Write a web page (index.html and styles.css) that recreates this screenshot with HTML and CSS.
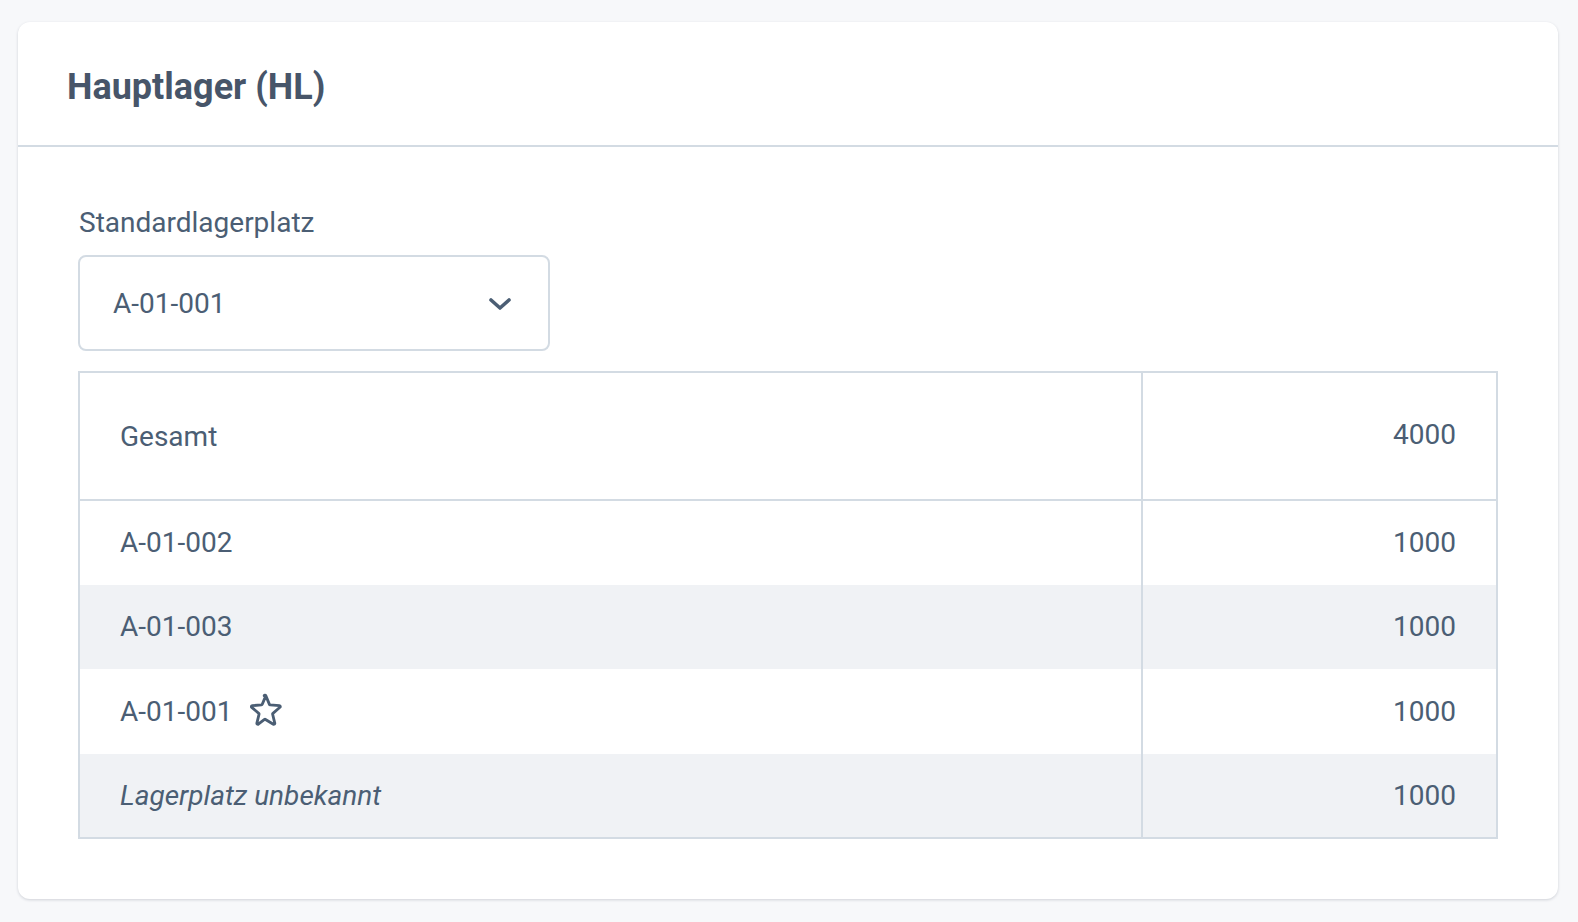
FILE: index.html
```html
<!DOCTYPE html>
<html lang="de">
<head>
<meta charset="utf-8">
<title>Hauptlager</title>
<link rel="stylesheet" href="styles.css">
</head>
<body>
<div class="card">
  <div class="card-header">
    <h1 class="title">Hauptlager (HL)</h1>
  </div>
  <div class="card-body">
    <label class="label">Standardlagerplatz</label>
    <div class="select">
      <span class="select-value">A-01-001</span>
      <svg class="chevron" viewBox="0 0 24 14" width="24" height="14" fill="none" stroke="currentColor" stroke-width="3.6" stroke-linecap="round" stroke-linejoin="round"><path d="M3 3l9 8 9-8"/></svg>
    </div>
    <table class="stock">
      <tr class="head">
        <td class="name">Gesamt</td>
        <td class="qty qty-head">4000</td>
      </tr>
      <tr>
        <td class="name">A-01-002</td>
        <td class="qty">1000</td>
      </tr>
      <tr class="alt">
        <td class="name">A-01-003</td>
        <td class="qty">1000</td>
      </tr>
      <tr>
        <td class="name"><span class="with-icon">A-01-001<svg class="star" viewBox="0 0 24 24" width="40" height="40" fill="none" stroke="currentColor" stroke-width="1.7" stroke-linejoin="round"><path d="M11.48 3.5a.56.56 0 0 1 1.04 0l2.13 5.1a.56.56 0 0 0 .47.35l5.52.44c.5.04.7.66.32.99l-4.2 3.6a.56.56 0 0 0-.18.56l1.28 5.38a.56.56 0 0 1-.84.61l-4.73-2.88a.56.56 0 0 0-.58 0L7.98 20.53a.56.56 0 0 1-.84-.61l1.28-5.38a.56.56 0 0 0-.18-.56l-4.2-3.6a.56.56 0 0 1 .32-.99l5.52-.44a.56.56 0 0 0 .47-.35l2.13-5.1z"/></svg></span></td>
        <td class="qty">1000</td>
      </tr>
      <tr class="alt">
        <td class="name unknown">Lagerplatz unbekannt</td>
        <td class="qty">1000</td>
      </tr>
    </table>
  </div>
</div>
</body>
</html>
```
FILE: styles.css
```css
* { box-sizing: border-box; }
html, body { margin: 0; padding: 0; }
body {
  background: #f7f8fa;
  font-family: Roboto, "Liberation Sans", Arial, sans-serif;
  color: #4b5e74;
  padding: 22px 20px 0 18px;
  height: 922px;
}
.card {
  background: #ffffff;
  border-radius: 12px;
  box-shadow: 0 1px 3px rgba(30, 41, 59, 0.18);
  height: 877px;
  display: flex;
  flex-direction: column;
}
.card-header {
  height: 127px;
  border-bottom: 2px solid #d3dbe3;
  padding: 0 49px;
  display: flex;
  align-items: center;
}
.title {
  margin: 0;
  padding-top: 7px;
  font-size: 36px;
  font-weight: 700;
  color: #475569;
}
.card-body {
  padding: 59px 60px 60px 60px;
  display: flex;
  flex-direction: column;
}
.label {
  font-size: 28px;
  line-height: 33px;
  margin-bottom: 16px;
  padding-left: 1px;
}
.select {
  width: 472px;
  height: 96px;
  border: 2px solid #d3dbe3;
  border-radius: 8px;
  display: flex;
  align-items: center;
  justify-content: space-between;
  padding: 0 36px 0 33px;
  font-size: 28px;
}
.chevron { margin-top: 2px; }
.stock {
  margin-top: 20px;
  width: 100%;
  border-collapse: collapse;
  border: 2px solid #d3dbe3;
  font-size: 28px;
}
.stock td {
  padding: 0 40px;
  height: 84.5px;
  border-top: none;
}
.stock tr.head td { height: 128px; }
.stock tr.head + tr td { border-top: 2px solid #d3dbe3; }
.stock td.qty {
  width: 355px;
  text-align: right;
  border-left: 2px solid #d3dbe3;
}
.qty-head { padding-bottom: 4px !important; }
.stock tr.alt td { background: #f0f2f5; }
.unknown { font-style: italic; }
.with-icon { display: inline-flex; align-items: center; gap: 13px; }
.star { margin-top: -2px; }
```
